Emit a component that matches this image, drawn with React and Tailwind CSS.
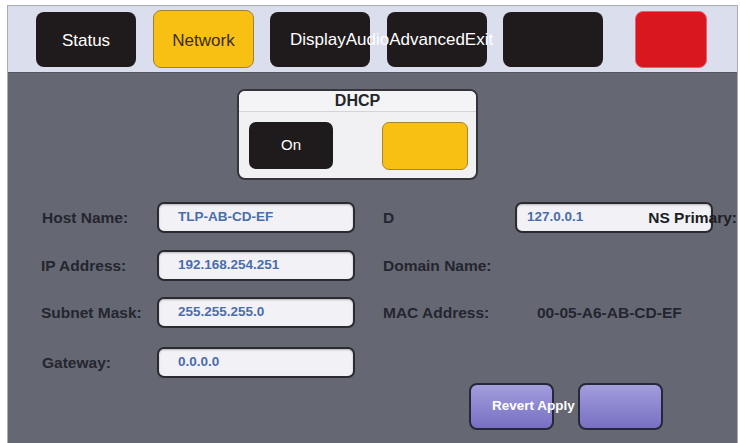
export default function App() {
  const font = { fontFamily: '"Liberation Sans", Arial, sans-serif' };

  const Field = ({ value, pad = "pl-[19px]", children }) => (
    <div
      className={`flex h-[31px] w-[198px] items-center rounded-[7px] border-2 border-[#2a2a30] bg-[#f2f2f6] shadow-[inset_0_1px_2px_rgba(0,0,0,0.25)] ${pad}`}
    >
      <span className="text-[13.5px] font-bold text-[#4a6dac]">{value}</span>
      {children}
    </div>
  );

  const Label = ({ children, className = "" }) => (
    <span className={`whitespace-nowrap text-[15.5px] font-bold text-[#24252e] ${className}`}>
      {children}
    </span>
  );

  return (
    <div className="h-[443px] w-[740px] overflow-hidden bg-white pt-[5px] pl-[7px]" style={font}>
      <div className="w-[731px] border-x border-t border-[#a8aab4]">
        {/* tab bar */}
        <div className="flex h-[66px] items-center bg-[#dadeed] pl-[28px]">
          <div className="flex h-[55px] w-[100px] items-center justify-center rounded-[8px] bg-[#1f1b1c] pt-[3px] text-[17px] text-white">
            Status
          </div>
          <div className="ml-[17px] flex h-[58px] w-[101px] items-center justify-center rounded-[8px] border border-[#9c8236] bg-[#f8c013] pt-[3px] text-[17px] text-[#3b2c12]">
            Network
          </div>
          <div className="relative z-10 ml-[16px] flex h-[55px] w-[100px] items-center rounded-[8px] bg-[#1f1b1c] pl-[20px] pt-[1px] text-[17px] text-white">
            <span className="whitespace-nowrap">DisplayAudioAdvancedExit</span>
          </div>
          <div className="ml-[17px] h-[55px] w-[100px] rounded-[8px] bg-[#1f1b1c]" />
          <div className="ml-[16px] h-[55px] w-[100px] rounded-[8px] bg-[#1f1b1c]" />
          <div className="ml-[32px] h-[57px] w-[72px] rounded-[8px] border border-[#e8606a] bg-[#d8171f]" />
        </div>

        {/* network settings */}
        <div className="relative h-[371px] border-t border-[#55575f] bg-[#656873]">
          <div className="ml-[229px] mt-[16px] flex h-[91px] w-[241px] flex-col overflow-hidden rounded-[8px] border-2 border-[#34353b] bg-[#f1f1f3]">
            <div className="flex h-[21px] items-center justify-center border-b border-[#d3d3d8] bg-[#f4f4f6] text-[16px] font-bold text-[#25262c]">
              DHCP
            </div>
            <div className="flex items-start justify-between pl-[10px] pr-[8px] pt-[10px]">
              <div className="flex h-[47px] w-[84px] items-center justify-center rounded-[7px] bg-[#1f1b1c] text-[15px] text-white">
                On
              </div>
              <div className="h-[48px] w-[86px] rounded-[7px] border border-[#a88630] bg-[#f8c013]" />
            </div>
          </div>

          <div className="mt-[22px] flex flex-col">
            <div className="flex h-[31px] items-center">
              <Label className="ml-[34px] w-[115px]">Host Name:</Label>
              <Field value="TLP-AB-CD-EF" />
              <Label className="ml-[28px] w-[132px]">D</Label>
              <Field value="127.0.0.1" pad="pl-[10px]">
                <span className="ml-auto mr-[-26px] whitespace-nowrap text-[15.5px] font-bold text-[#1c1d24]">
                  NS Primary:
                </span>
              </Field>
            </div>
            <div className="mt-[17px] flex h-[31px] items-center">
              <Label className="ml-[33px] w-[116px]">IP Address:</Label>
              <Field value="192.168.254.251" />
              <Label className="ml-[28px]">Domain Name:</Label>
            </div>
            <div className="mt-[16px] flex h-[31px] items-center">
              <Label className="ml-[33px] w-[116px]">Subnet Mask:</Label>
              <Field value="255.255.255.0" />
              <Label className="ml-[28px] w-[154px]">MAC Address:</Label>
              <Label>00-05-A6-AB-CD-EF</Label>
            </div>
            <div className="mt-[19px] flex h-[31px] items-center">
              <Label className="ml-[34px] w-[115px]">Gateway:</Label>
              <Field value="0.0.0.0" />
            </div>
          </div>

          <div className="ml-[461px] mt-[5px] flex gap-[24px]">
            <div className="relative z-10 flex h-[47px] w-[85px] items-center rounded-[8px] border-2 border-[#27273a] bg-gradient-to-b from-[#a39edd] to-[#7770c2] pl-[21px]">
              <span className="whitespace-nowrap text-[13.5px] font-bold text-white">Revert Apply</span>
            </div>
            <div className="h-[47px] w-[85px] rounded-[8px] border-2 border-[#27273a] bg-gradient-to-b from-[#a39edd] to-[#7770c2]" />
          </div>
        </div>
      </div>
    </div>
  );
}
